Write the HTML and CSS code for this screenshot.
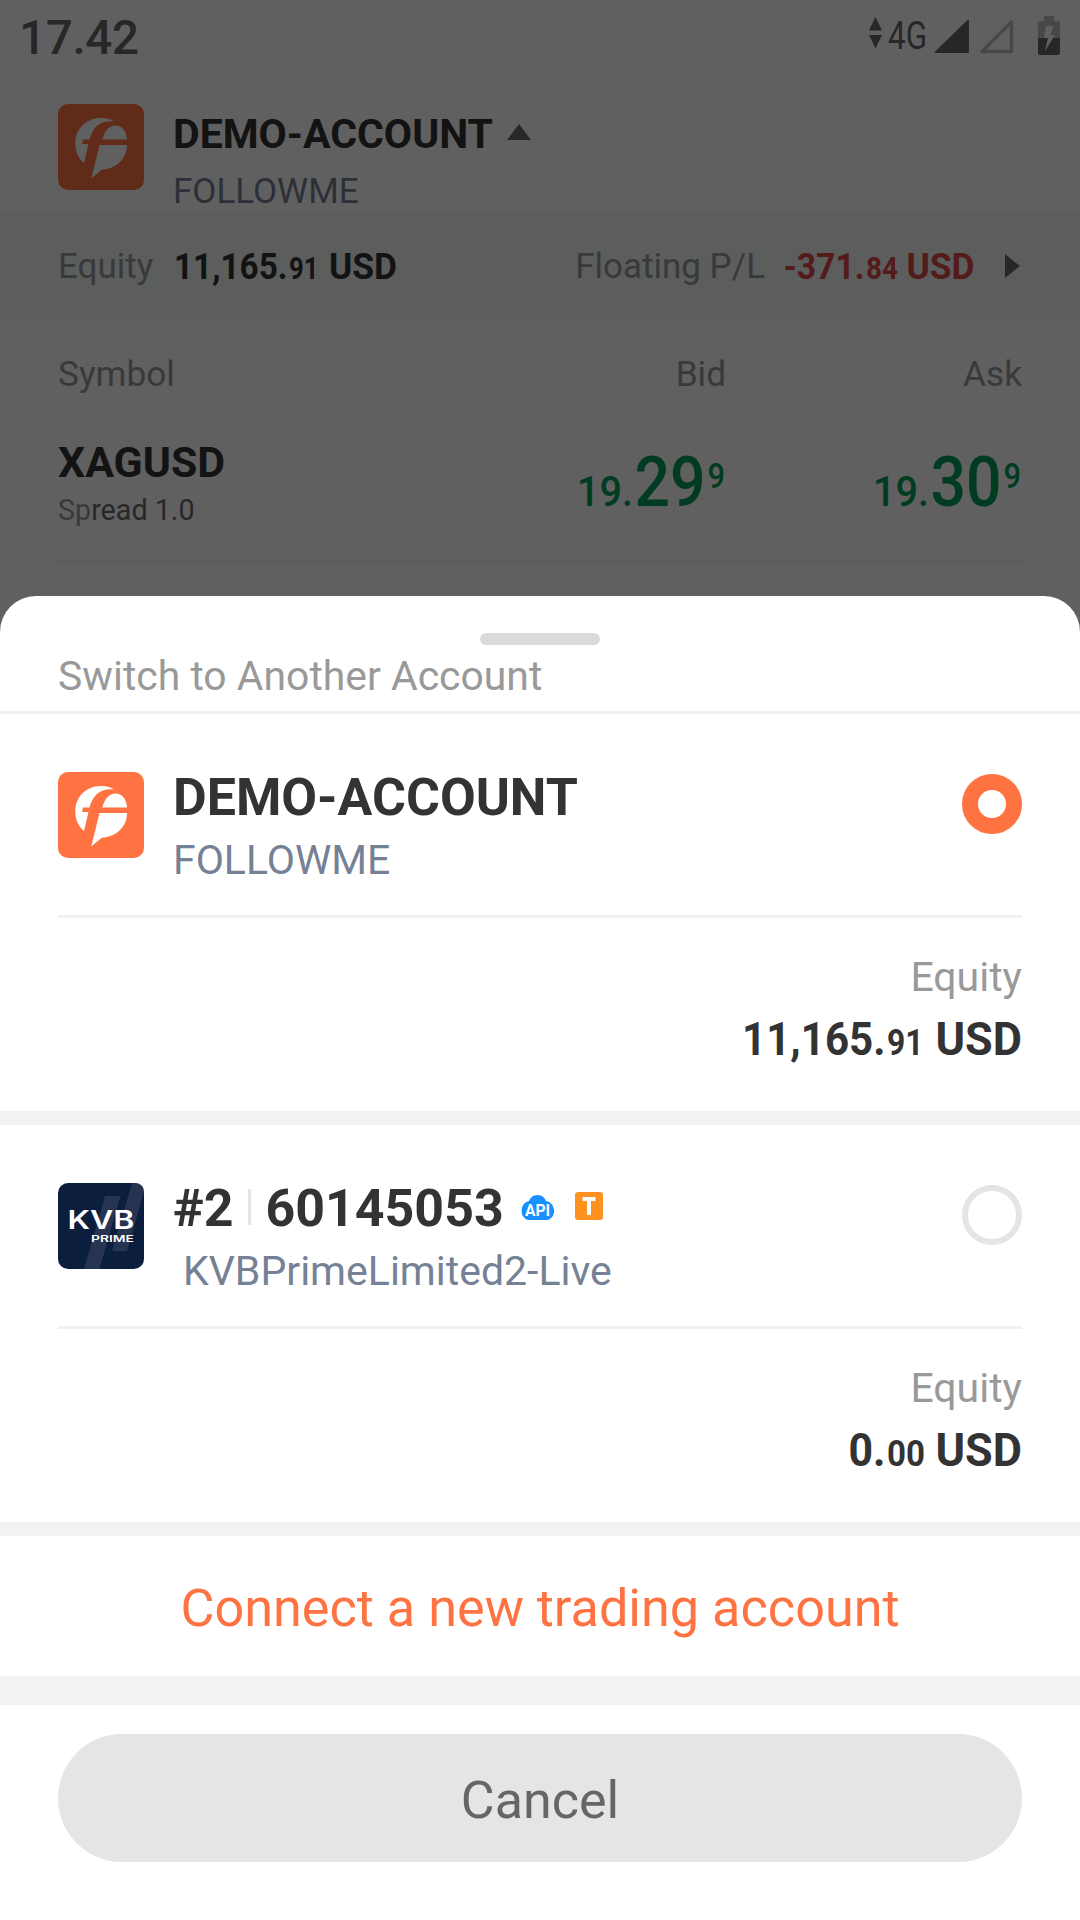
FILE: index.html
```
<!DOCTYPE html>
<html lang="en">
<head>
<meta charset="utf-8">
<title>Switch account</title>
<link rel="stylesheet" href="styles.css">
</head>
<body>
<svg class="defs" aria-hidden="true">
  <symbol id="followme" viewBox="0 0 86 86">
    <rect width="86" height="86" rx="10" fill="#ff7342"/>
    <path fill="#fff" d="M56 17.300C52 15 48 14 43 14C28 14 17.300 25 17.300 39C17.300 47 20 54 26 59L30.500 40H24L25 35.500H31.500C35 23 42 16 56 17.300Z"/>
    <path fill="#fff" d="M44.300 35.500H69C68.500 28 65 21.500 57.500 21.500C50 21.500 46.500 28 44.300 35.500ZM41.500 41H69C69 55 58 65 43.700 65.700L33.300 74.500Z"/>
  </symbol>
</svg>

<div class="app">
  <header class="status">
    <span class="clock">17.42</span>
    <svg class="arrows" viewBox="0 0 13 32"><path d="M6.500 0L13 13.500H0ZM0 18H13L6.500 31.500Z" fill="#696969"/></svg>
    <svg class="net" viewBox="0 0 40 46"><text x="0" y="37" textLength="39" lengthAdjust="spacingAndGlyphs">4G</text></svg>
    <svg class="signal" viewBox="0 0 35 35"><path d="M34 2V33H2Z" fill="#696969" stroke="#696969" stroke-width="2" stroke-linejoin="round"/></svg>
    <svg class="signal second" viewBox="0 0 35 35"><path d="M32.500 3V32.500H3Z" fill="none" stroke="#bfbfbf" stroke-width="3.500" stroke-linejoin="round"/></svg>
    <svg class="battery" viewBox="0 0 22 39"><path d="M6 0H16V5H20Q22 5 22 7V22H0V7Q0 5 2 5H6Z" fill="#bfbfbf"/><path d="M0 22H22V37Q22 39 20 39H2Q0 39 0 37Z" fill="#696969"/><path d="M8 10H15.500L12.500 19H17L7 35L10 22H6Z" fill="#fff"/></svg>
  </header>

  <section class="current">
    <svg class="logo"><use href="#followme"/></svg>
    <div class="who">
      <div class="name">DEMO-ACCOUNT <svg class="up" viewBox="0 0 24 16"><path d="M12 0L24 16H0Z" fill="#6a6a6a"/></svg></div>
      <div class="broker">FOLLOWME</div>
    </div>
  </section>

  <section class="summary">
    <span class="label own">Equity</span>
    <svg class="money" width="226" height="50">
      <text class="int" x="0" y="37" textLength="113.500" lengthAdjust="spacingAndGlyphs">11,165.</text>
      <text class="dec" x="115" y="37" textLength="29.500" lengthAdjust="spacingAndGlyphs">91</text>
      <text class="int" x="155" y="37" textLength="68" lengthAdjust="spacingAndGlyphs">USD</text>
    </svg>
    <span class="label pl">Floating P/L</span>
    <svg class="money loss" width="194" height="50">
      <text class="int" x="0.500" y="37" textLength="81" lengthAdjust="spacingAndGlyphs">-371.</text>
      <text class="dec" x="83" y="37" textLength="32" lengthAdjust="spacingAndGlyphs">84</text>
      <text class="int" x="123.500" y="37" textLength="68" lengthAdjust="spacingAndGlyphs">USD</text>
    </svg>
    <svg class="next" viewBox="0 0 15 24"><path d="M0 0L15 12L0 24Z" fill="#696969"/></svg>
  </section>

  <section class="market">
    <div class="row heads"><span>Symbol</span><span>Bid</span><span>Ask</span></div>
    <div class="row quote">
      <div><div class="symbol">XAGUSD</div><div class="spread"><span>Sp</span>read 1.0</div></div>
      <svg class="price" width="150" height="90">
        <text class="whole" x="1" y="70" textLength="56" lengthAdjust="spacingAndGlyphs">19.</text>
        <text class="pips" x="58.500" y="70" textLength="71" lengthAdjust="spacingAndGlyphs">29</text>
        <text class="frac" x="131.500" y="52" textLength="17.500" lengthAdjust="spacingAndGlyphs">9</text>
      </svg>
      <svg class="price" width="150" height="90">
        <text class="whole" x="1" y="70" textLength="56" lengthAdjust="spacingAndGlyphs">19.</text>
        <text class="pips" x="58.500" y="70" textLength="71" lengthAdjust="spacingAndGlyphs">30</text>
        <text class="frac" x="131.500" y="52" textLength="17.500" lengthAdjust="spacingAndGlyphs">9</text>
      </svg>
    </div>
  </section>
</div>

<div class="scrim">
  <main class="sheet">
    <div class="handle"></div>
    <h1 class="title">Switch to Another Account</h1>

    <section class="card">
      <div class="account">
        <svg class="logo"><use href="#followme"/></svg>
        <div class="who">
          <div class="name">DEMO-ACCOUNT</div>
          <div class="broker">FOLLOWME</div>
        </div>
        <span class="radio on"></span>
      </div>
      <div class="equity">
        <div class="label">Equity</div>
        <svg class="money" width="286" height="60">
          <text class="int" x="4" y="44" textLength="143.500" lengthAdjust="spacingAndGlyphs">11,165.</text>
          <text class="dec" x="149" y="44" textLength="36.500" lengthAdjust="spacingAndGlyphs">91</text>
          <text class="int" x="197.500" y="44" textLength="86.500" lengthAdjust="spacingAndGlyphs">USD</text>
        </svg>
      </div>
    </section>

    <section class="card">
      <div class="account">
        <svg class="logo" viewBox="0 0 86 86">
          <rect width="86" height="86" rx="10" fill="#0b1e3e"/>
          <path d="M47 13H62.500L41.500 86H26ZM74 0H76Q86 0 86 9L69 68H54Z" fill="#263451"/>
          <text x="9.500" y="46" class="kvb" textLength="67" lengthAdjust="spacingAndGlyphs">KVB</text>
          <text x="33" y="58.500" class="prime" textLength="43" lengthAdjust="spacingAndGlyphs">PRIME</text>
        </svg>
        <div class="who">
          <div class="name">#2<i class="bar"></i>60145053
            <svg class="api" viewBox="0 0 35 28"><path d="M9 9A9 9 0 0 1 26 9A10 10 0 0 1 28 28H8A10 10 0 0 1 9 9Z" fill="#1890ff"/><text x="5" y="23.500" class="api-text" textLength="25" lengthAdjust="spacingAndGlyphs">API</text></svg>
            <svg class="tee" viewBox="0 0 28 28"><rect width="28" height="28" rx="3" fill="#ff9120"/><path d="M7.500 5H20.500V9H16V23H12V9H7.500Z" fill="#fff"/></svg>
          </div>
          <div class="broker server">KVBPrimeLimited2-Live</div>
        </div>
        <span class="radio"></span>
      </div>
      <div class="equity">
        <div class="label">Equity</div>
        <svg class="money" width="286" height="60">
          <text class="int" x="110.500" y="44" textLength="37" lengthAdjust="spacingAndGlyphs">0.</text>
          <text class="dec" x="149" y="44" textLength="38" lengthAdjust="spacingAndGlyphs">00</text>
          <text class="int" x="197.500" y="44" textLength="86.500" lengthAdjust="spacingAndGlyphs">USD</text>
        </svg>
      </div>
    </section>

    <a class="connect">Connect a new trading account</a>
    <div class="footer"><button class="cancel">Cancel</button></div>
  </main>
</div>
</body>
</html>
```
FILE: styles.css
```
* { box-sizing: border-box; }
body { margin: 0; width: 1080px; height: 1920px; overflow: hidden; background: #fff; font-family: Roboto, sans-serif; color: #333; }
svg { display: block; flex: none; overflow: visible; }
.defs { position: absolute; width: 0; height: 0; }
.app { height: 1920px; }

.status { height: 104px; padding: 16px 20px 0 19px; display: flex; align-items: flex-start; color: #696969; }
.clock { flex: 1; font-size: 47.500px; line-height: 44px; font-weight: 500; letter-spacing: -0.300px; }
.arrows { width: 13px; height: 32px; margin-top: 1px; }
.net { width: 40px; height: 46px; margin: -4px 6px 0 6px; font-size: 38px; fill: #696969; }
.signal { width: 35px; height: 35px; margin-top: 3px; }
.second { margin-left: 10px; }
.battery { width: 22px; height: 39px; margin-left: 24px; }

.current { height: 109px; padding: 0 58px; display: flex; gap: 29px; }
.logo { width: 86px; height: 86px; }
.name { font-weight: 700; white-space: nowrap; display: flex; align-items: center; }
.broker { color: #758195; white-space: nowrap; }
.current .name { font-size: 41px; line-height: 60px; }
.current .broker { font-size: 35px; line-height: 56px; }
.up { width: 24px; height: 16px; margin: -5px 0 0 14px; }

.summary { height: 107px; padding: 0 58px; display: flex; align-items: center; background: #f3f8f6; }
.label { color: #999; }
.summary .label { font-size: 35px; }
.summary .own { width: 116px; }
.summary .pl { margin: 0 18px 0 auto; }
.next { width: 15px; height: 24px; margin: -1px 2px 0 28px; }
.money { fill: #333; font-size: 37px; font-weight: 700; }
.money .dec { font-size: 30.500px; }
.loss { fill: #e04848; }

.market { padding: 0 58px; }
.row { display: grid; grid-template-columns: 1fr 296px 296px; }
.row > :nth-child(n+2) { text-align: right; }
.heads { font-size: 35.200px; line-height: 50px; padding-top: 29px; color: #999; height: 79px; }
.quote { height: 164px; padding-top: 36px; border-bottom: 3px solid #f3f3f3; }
.symbol { font-size: 42.800px; line-height: 54px; font-weight: 700; }
.spread { font-size: 28.700px; line-height: 40px; margin-top: 1px; color: #696969; }
.spread span { color: #999; }
.price { fill: #009d5a; font-weight: 500; justify-self: end; margin-top: 1px; }
.whole { font-size: 43px; }
.pips { font-size: 70px; }
.frac { font-size: 35px; }

.scrim { position: absolute; inset: 0; background: rgba(0,0,0,.624); display: flex; align-items: flex-end; }
.sheet { width: 1080px; height: 1324px; background: #fff; border-radius: 36px 36px 0 0; }
.handle { width: 120px; height: 12px; border-radius: 6px; background: #dadada; margin: 0 auto; transform: translateY(37px); }
.title { margin: 0; height: 106px; padding: 43px 58px 0; border-bottom: 3px solid #f2f2f2; font-size: 40.900px; line-height: 50px; font-weight: 400; color: #999; }
.card { height: 411px; border-bottom: 14px solid #f2f2f2; padding: 0 58px; }
.account { height: 204px; padding-top: 58px; display: flex; gap: 29px; border-bottom: 3px solid #f2f2f2; }
.who { flex: 1; }
.account .name { font-size: 51.900px; line-height: 60px; margin-top: -4px; }
.account .broker { font-size: 41px; line-height: 50px; margin-top: 7px; }
.account .server { padding-left: 10px; }
.radio { width: 60px; height: 60px; border: 6px solid #e5e5e5; border-radius: 50%; margin-top: 2px; }
.radio.on { border: 16.500px solid #ff7342; }
.bar { width: 3px; height: 36px; background: #e5e5e5; margin: -4px 15px 0 14px; }
.api { width: 35px; height: 28px; margin: -7px 0 0 16px; }
.tee { width: 28px; height: 28px; margin: -7px 0 0 20px; }
.kvb { font: 600 25px Inter, sans-serif; fill: #fff; }
.prime { font: 600 9.500px Inter, sans-serif; fill: #fff; }
.api-text { font: 700 16px Roboto, sans-serif; fill: #fff; }
.equity { padding-top: 34px; }
.equity .label { font-size: 41px; line-height: 50px; text-align: right; }
.equity .money { font-size: 46.500px; margin: 9px -2px 0 auto; }
.equity .dec { font-size: 37px; }
.connect { display: block; height: 169px; border-bottom: 29px solid #f2f2f2; text-align: center; font-size: 52.200px; line-height: 146px; color: #ff7342; }
.footer { padding: 29px 58px; }
.cancel { display: block; width: 100%; height: 128px; border: 0; border-radius: 64px; background: #e5e5e5; color: #666; font: 400 52px/134px Roboto, sans-serif; padding: 0; }
```
